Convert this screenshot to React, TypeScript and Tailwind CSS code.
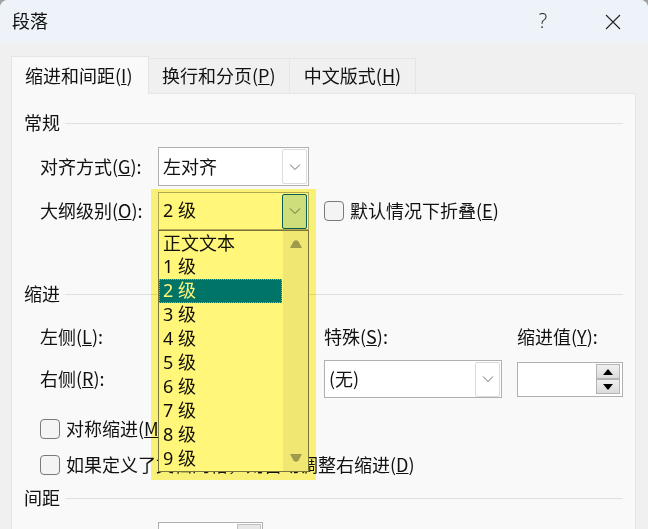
import React from "react";

const font = { fontFamily: '"Noto Sans CJK SC", "Noto Sans", sans-serif' };

function Chevron({ color = "#6b6b6b" }: { color?: string }) {
  return (
    <svg width="12" height="8" viewBox="0 0 12 8" fill="none">
      <path d="M1 1.5 L6 6.5 L11 1.5" stroke={color} strokeWidth="1" />
    </svg>
  );
}

function Select({ value, width, active }: { value: string; width: string; active?: boolean }) {
  return (
    <div className={`${width} h-full bg-white border border-[#b0b0b0] flex items-center justify-between pl-[4px] pr-[1px]`}>
      <span className={active ? "pb-[2px] font-['Noto_Sans','Noto_Sans_CJK_SC',sans-serif]" : "pb-[2px]"}>{value}</span>
      <div
        className={
          active
            ? "w-[25px] h-[35px] rounded-[2px] border border-[#0b5fa8] bg-[#cde6ff] flex items-center justify-center"
            : "w-[25px] h-[35px] rounded-[2px] border border-[#dcdcdc] bg-white flex items-center justify-center"
        }
      >
        <Chevron />
      </div>
    </div>
  );
}

function Header({ children, className = "" }: { children: React.ReactNode; className?: string }) {
  return (
    <div className={`h-[20px] flex items-center gap-[5px] ${className}`}>
      <span className="-ml-px pb-[2px]">{children}</span>
      <div className="flex-1 h-px bg-[#e0e0e0]" />
    </div>
  );
}

function Box() {
  return <div className="w-[20px] h-[20px] shrink-0 rounded-[4px] border border-[#7a7a7a] bg-[#f4f4f4]" />;
}

function Spin({ up }: { up?: boolean }) {
  return (
    <div className="w-[24px] h-[15px] bg-gradient-to-b from-[#f0f0f0] to-[#dcdcdc] border border-[#b4b4b4] flex items-center justify-center">
      <svg width="10" height="6" viewBox="0 0 10 6">
        <path d={up ? "M0 6 L5 0 L10 6 Z" : "M0 0 L5 6 L10 0 Z"} fill="#000" />
      </svg>
    </div>
  );
}

const levels = ["正文文本", "1 级", "2 级", "3 级", "4 级", "5 级", "6 级", "7 级", "8 级", "9 级"];

export default function App() {
  return (
    <div className="w-[648px] h-[529px] bg-[#a0a0a0]">
      <div
        className="relative w-[648px] h-[529px] overflow-hidden bg-[#f0f0f0] text-[18px] leading-[20px] text-[#111] rounded-t-[8px]"
        style={font}
      >
        <div className="h-[43px] bg-[#eef3fa] flex items-center pl-[12px]">
          <span className="flex-1 pb-[4px]">段落</span>
          <span className="w-[20px] text-center text-[#222] pb-[2px] text-[20px] font-light font-['Open_Sans',sans-serif]">?</span>
          <div className="w-[95px] flex pl-[52px]">
            <svg width="16" height="16" viewBox="0 0 16 16" fill="none">
              <path d="M1 1 L15 15 M15 1 L1 15" stroke="#222" strokeWidth="1.1" />
            </svg>
          </div>
        </div>

        <div className="flex items-end pl-[11px] pt-[13px] relative z-10 -mb-px h-[51px]">
          <div className="h-[38px] w-[138px] bg-[#f9f9f9] border border-b-0 border-[#e5e5e5] flex items-center pl-[13px]">
            <span className="pb-[2px]">缩进和间距(<u>I</u>)</span>
          </div>
          <div className="h-[36px] w-[141px] border-t border-r border-b border-[#e5e5e5] flex items-center pl-[13px]">
            <span className="pb-[2px]">换行和分页(<u>P</u>)</span>
          </div>
          <div className="h-[36px] w-[126px] border-t border-r border-b border-[#e5e5e5] flex items-center justify-center">
            <span className="pb-[2px]">中文版式(<u>H</u>)</span>
          </div>
        </div>

        <div className="ml-[11px] w-[625px] h-[460px] bg-[#f9f9f9] border border-[#e5e5e5] pl-[13px] pr-[12px] pt-[19px]">
          <Header>常规</Header>

          <div className="mt-[14px] h-[39px] pl-[15px] flex items-center">
            <span className="w-[118px] pb-[2px]">对齐方式(<u>G</u>):</span>
            <Select value="左对齐" width="w-[151px]" />
          </div>

          <div className="mt-[6px] h-[38px] pl-[15px] flex items-center">
            <span className="w-[118px] pb-[2px]">大纲级别(<u>O</u>):</span>
            <Select value="2 级" width="w-[151px]" active />
            <div className="ml-[15px] flex items-center gap-[6px]">
              <Box />
              <span className="pb-[2px]">默认情况下折叠(<u>E</u>)</span>
            </div>
          </div>

          <Header className="mt-[54px]">缩进</Header>

          <div className="mt-[22px] h-[21px] pl-[15px] grid grid-cols-[284px_193px_106px]">
            <span>左侧(<u>L</u>):</span>
            <span>特殊(<u>S</u>):</span>
            <span>缩进值(<u>Y</u>):</span>
          </div>

          <div className="mt-[13px] h-[38px] pl-[15px] grid grid-cols-[284px_193px_106px] items-center">
            <span className="pb-[2px]">右侧(<u>R</u>):</span>
            <Select value="(无)" width="w-[178px]" />
            <div className="h-[35px] bg-white border border-[#b0b0b0] flex flex-col items-end justify-center pr-[2px]">
              <Spin up />
              <Spin />
            </div>
          </div>

          <div className="mt-[21px] h-[20px] pl-[15px] flex items-center gap-[6px]">
            <Box />
            <span className="pb-[2px]">对称缩进(<u>M</u>)</span>
          </div>

          <div className="mt-[16px] h-[20px] pl-[15px] flex items-center gap-[6px]">
            <Box />
            <span className="pb-[2px]">如果定义了文档网格，则自动调整右缩进(<u>D</u>)</span>
          </div>

          <Header className="mt-[13px]">间距</Header>

          <div className="mt-[14px] pl-[133px] flex">
            <div className="w-[105px] h-[35px] bg-white border border-[#b0b0b0] flex items-center justify-between pl-[4px] pr-[1px]">
              <span className="pb-[4px]">0 行</span>
              <div className="w-[24px] h-[15px] self-start mt-[1px] bg-[#e8e8e8] border border-[#c0c0c0]" />
            </div>
          </div>
        </div>

        {/* Open dropdown list */}
        <div className="absolute left-[158px] top-[230px] w-[151px] h-[242px] bg-white border border-[#7a7a7a] flex">
          <div className="w-[124px] pr-[1px] flex flex-col font-['Noto_Sans','Noto_Sans_CJK_SC',sans-serif]">
            {levels.map((l, i) => (
              <div
                key={l}
                className={
                  i === 2
                    ? "h-[24px] leading-[20px] pl-[3px] bg-[#0078d4] text-white border border-dotted border-[#ff8c40]"
                    : i === 0
                      ? "h-[24px] leading-[22px] pl-[4px] font-['Noto_Sans_CJK_SC',sans-serif]"
                      : "h-[24px] leading-[22px] pl-[4px]"
                }
              >
                {l}
              </div>
            ))}
          </div>
          <div className="flex-1 bg-[#f0f0f0] flex flex-col items-center justify-between py-[9px]">
            <svg width="12" height="8" viewBox="0 0 12 8">
              <path d="M0 8 L3.5 1.5 Q6 -1 8.5 1.5 L12 8 Z" fill="#a0a0a0" />
            </svg>
            <svg width="12" height="8" viewBox="0 0 12 8">
              <path d="M0 0 L3.5 6.5 Q6 9 8.5 6.5 L12 0 Z" fill="#a0a0a0" />
            </svg>
          </div>
        </div>

        {/* Yellow highlighter */}
        <div className="absolute left-[151px] top-[189px] w-[165px] h-[291px] bg-[#fff67a] mix-blend-multiply pointer-events-none" />
      </div>
    </div>
  );
}
